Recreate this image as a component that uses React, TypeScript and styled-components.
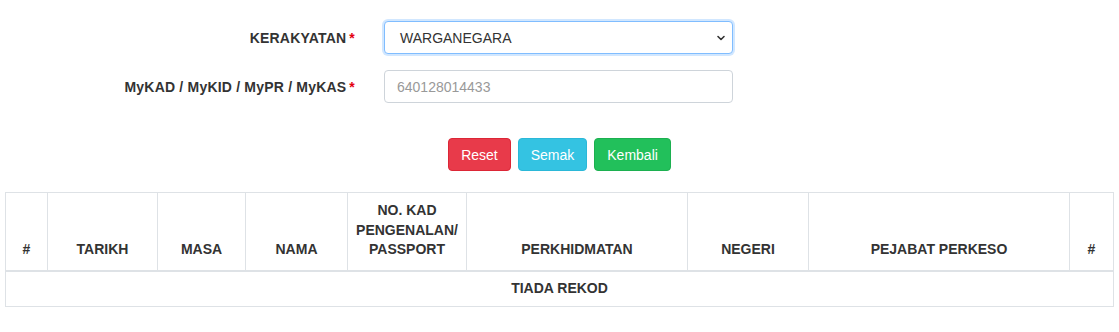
import React from "react"
import styled, {createGlobalStyle} from "styled-components"

const GlobalStyle = createGlobalStyle`
  body {
    margin: 0;
    background: #ffffff;
    font-family: "Liberation Sans", Arial, sans-serif;
    font-size: 14px;
    color: #333333;
  }
`

const Page = styled.div`
  width: 1119px;
  padding-top: 21px;
`

const Form = styled.div`
  display: flex;
  flex-direction: column;
  gap: 16px;
`

const Row = styled.div`
  display: flex;
  align-items: center;
  gap: 29px;
`

const Label = styled.label`
  width: 355px;
  text-align: right;
  font-weight: bold;
  color: #333333;
  letter-spacing: 0.2px;
`

const Required = styled.span`
  color: #e3000f;
  margin-left: 3px;
`

const controlBase = `
  box-sizing: border-box;
  width: 349px;
  height: 33px;
  border-radius: 4px;
  font-family: "Liberation Sans", Arial, sans-serif;
  font-size: 14px;
  background: #ffffff;
  outline: none;
`

const Select = styled.div`
  ${controlBase}
  display: flex;
  align-items: center;
  justify-content: space-between;
  padding: 0 6px 0 15px;
  border: 1px solid #80bdff;
  box-shadow: 0 0 0 2px rgba(0, 123, 255, 0.18);
  color: #333333;
`

const Input = styled.input`
  ${controlBase}
  padding: 0 12px;
  border: 1px solid #ced4da;
  color: #495057;
  &::placeholder {
    color: #999999;
  }
`

const Buttons = styled.div`
  display: flex;
  justify-content: center;
  gap: 7px;
  margin-top: 35px;
`

const Button = styled.button<{$bg: string, $border: string}>`
  height: 33px;
  padding: 0 12px;
  border-radius: 4px;
  border: 1px solid ${p => p.$border};
  background: ${p => p.$bg};
  color: #ffffff;
  font-family: "Liberation Sans", Arial, sans-serif;
  font-size: 14px;
`

const TableWrap = styled.div`
  padding: 21px 6px 0 5px;
`

const Table = styled.table`
  width: 1108px;
  table-layout: fixed;
  border-collapse: collapse;
`

const Th = styled.th`
  border: 1px solid #dee2e6;
  border-bottom: 2px solid #dee2e6;
  padding: 8px 6px 10px;
  line-height: 19.5px;
  vertical-align: bottom;
  text-align: center;
  font-weight: bold;
  color: #333333;
`

const Td = styled.td`
  border: 1px solid #dee2e6;
  padding: 7px 6px 8px;
  line-height: 19.5px;
  text-align: center;
  font-weight: bold;
  color: #333333;
`

const columns = [
  {w: 42, label: "#"},
  {w: 110, label: "TARIKH"},
  {w: 88, label: "MASA"},
  {w: 102, label: "NAMA"},
  {w: 119, label: "NO. KAD PENGENALAN/ PASSPORT"},
  {w: 221, label: "PERKHIDMATAN"},
  {w: 121, label: "NEGERI"},
  {w: 261, label: "PEJABAT PERKESO"},
  {w: 44, label: "#"},
]

function Chevron(){
  return (
    <svg width="10" height="10" viewBox="0 0 10 10">
      <path d="M2 3.5 L5 6.5 L8 3.5" fill="none" stroke="#333" strokeWidth="1.6" strokeLinecap="round" strokeLinejoin="round"/>
    </svg>
  )
}

function App(){
  return (
    <Page>
      <GlobalStyle/>
      <Form>
        <Row>
          <Label>KERAKYATAN<Required>*</Required></Label>
          <Select>
            <span>WARGANEGARA</span>
            <Chevron/>
          </Select>
        </Row>
        <Row>
          <Label>MyKAD / MyKID / MyPR / MyKAS<Required>*</Required></Label>
          <Input placeholder="640128014433"/>
        </Row>
      </Form>
      <Buttons>
        <Button $bg="#e83a4a" $border="#dc2636">Reset</Button>
        <Button $bg="#34c3e2" $border="#2bb8d8">Semak</Button>
        <Button $bg="#22c05b" $border="#1cb050">Kembali</Button>
      </Buttons>
      <TableWrap>
        <Table>
          <colgroup>
            {columns.map((c, i) => <col key={i} style={{width: c.w}}/>)}
          </colgroup>
          <thead>
            <tr>
              {columns.map((c, i) => <Th key={i}>{c.label}</Th>)}
            </tr>
          </thead>
          <tbody>
            <tr>
              <Td colSpan={columns.length}>TIADA REKOD</Td>
            </tr>
          </tbody>
        </Table>
      </TableWrap>
    </Page>
  )
}

export default App
